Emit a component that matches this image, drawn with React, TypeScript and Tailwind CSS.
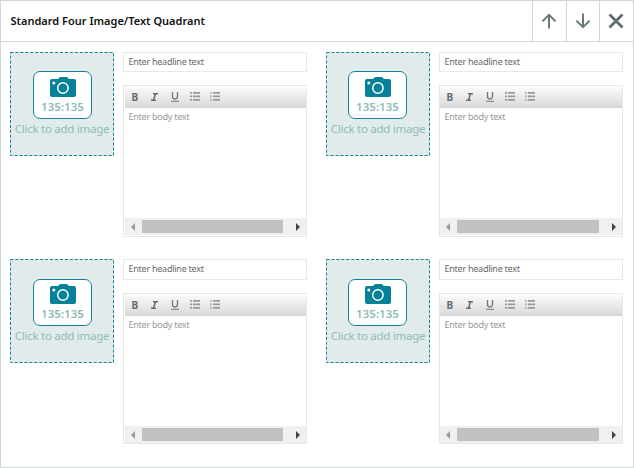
import React from "react";

function Arrow({ down = false }: { down?: boolean }) {
  return (
    <svg width="16" height="16" viewBox="0 0 16 16" fill="none" stroke="#68797a" strokeWidth="2" className={down ? "rotate-180" : ""}>
      <path d="M8 15.5V2M1.4 8.4L8 1.8L14.6 8.4" />
    </svg>
  );
}

function Camera() {
  return (
    <svg width="26" height="20" viewBox="0 0 26 20" className="block">
      <path d="M1.8 2H8l1.5-1.6Q10 0 10.8 0h5.4q.8 0 1.3.4L19 2h5q2 0 2 2v14q0 2-2 2H2q-2 0-2-2V4q0-2 1.8-2z" fill="#068298" />
      <circle cx="12.9" cy="11" r="5.2" fill="none" stroke="#fff" strokeWidth="1.5" />
      <circle cx="3.8" cy="6" r="1.5" fill="#fff" />
    </svg>
  );
}

function ImageSlot({ shift, lower }: { shift: boolean; lower: boolean }) {
  return (
    <div className="relative h-[104px] w-[104px] shrink-0 bg-[#e1ebec]">
      <svg width="104" height="104" className="absolute inset-0">
        <rect x="0.5" y="0.5" width="103" height="103" fill="none" stroke="#158294" strokeDasharray="3 1.95" />
      </svg>
      <div className={`flex flex-col items-center ${lower ? "pt-5" : "pt-[19px]"}`}>
        <div className={`flex w-[59px] flex-col items-center rounded-[7px] border border-[#158294] bg-white ${lower ? "h-[47px] pt-1" : "h-12 pt-[5px]"} ${shift ? "-ml-px" : "ml-px"}`}>
          <Camera />
          <span className="mt-[3px] font-['Noto_Sans',sans-serif] text-[11.5px] leading-[14px] font-semibold tracking-[0.05px] whitespace-nowrap text-[#8dbcb6]">135:135</span>
        </div>
        <span className="mt-[2px] font-['Noto_Sans',sans-serif] text-[11.5px] leading-4 tracking-[-0.26px] whitespace-nowrap text-[#8dbcb6]">Click to add image</span>
      </div>
    </div>
  );
}

function ListIcon({ numbered = false }: { numbered?: boolean }) {
  return (
    <svg width="11" height="9" viewBox="0 0 11 9" fill="#929a99">
      {[0, 3.5, 7].map((y) => (
        <g key={y}>
          <rect x={numbered ? 0.3 : 0} y={y} width={numbered ? 1.3 : 2} height="1.7" />
          <rect x="3" y={y} width="7" height="1.7" />
        </g>
      ))}
    </svg>
  );
}

function Toolbar() {
  return (
    <div className="flex h-[22px] items-center border-b border-[#d4d4d4] bg-linear-to-b from-[#fcfcfc] to-[#dadada] pl-[5px] font-['Noto_Sans',sans-serif] text-[10px] leading-none text-[#626c6b]">
      <span className="flex w-5 pl-[1.5px] font-bold">B</span>
      <span className="flex w-5 pl-px">
        <svg width="7" height="8" viewBox="0 0 7 8" fill="none" stroke="#626c6b" strokeWidth="1.5">
          <path d="M2 .75h5M0 7.25h5M4.5 .8L2.5 7.2" />
        </svg>
      </span>
      <span className="flex w-5 pl-px">
        <svg width="8" height="10" viewBox="0 0 8 10" fill="none" stroke="#707978">
          <path d="M1.5 0v4.5a2.5 2.5 0 0 0 5 0V0" strokeWidth="1.3" />
          <path d="M0 9.3h8" />
        </svg>
      </span>
      <span className="flex w-5"><ListIcon /></span>
      <span className="flex w-5"><ListIcon numbered /></span>
    </div>
  );
}

function Scrollbar({ right }: { right: boolean }) {
  return (
    <div className="flex h-[17px] items-center bg-[#f0f0f0] px-1.5">
      <svg width="4" height="8" viewBox="0 0 4 8"><path d="M4 0v8L0 4z" fill="#999" /></svg>
      <div className={`ml-[7px] h-[13px] bg-[#c1c1c1] ${right ? "w-[142px]" : "w-[141px]"}`} />
      <svg width="4" height="8" viewBox="0 0 4 8" className="ml-auto"><path d="M0 0v8l4-4z" fill="#444" /></svg>
    </div>
  );
}

function Quadrant({ right = false, lower = false }: { right?: boolean; lower?: boolean }) {
  return (
    <section className="flex w-[297px] gap-[9px]">
      <ImageSlot shift={right} lower={lower} />
      <div className="flex w-[184px] flex-col font-['Noto_Sans',sans-serif] text-[9px]">
        <div className={`border border-[#e5e9e9] pl-[4.5px] leading-[17px] tracking-[-0.25px] text-[#66696c] ${lower ? "h-[21px]" : "h-5"}`}>
          <span className="whitespace-nowrap">Enter headline text</span>
        </div>
        <div className={`mt-[13px] flex flex-col border border-[#e5e9e9] ${right ? "" : "pl-px"} ${lower ? "h-[151px]" : "h-[152px]"}`}>
          <Toolbar />
          <div className={`flex-1 leading-[18px] tracking-[-0.25px] text-[#959a9b] ${right ? "pl-[4.5px]" : "pl-[3.5px]"}`}>
            <span className="whitespace-nowrap">Enter body text</span>
          </div>
          <Scrollbar right={right} />
          {!lower && <div className="h-px" />}
        </div>
      </div>
    </section>
  );
}

export default function App() {
  return (
    <main className="h-[468px] w-[634px] border border-[#d3d7d7] bg-white">
      <header className="flex h-[41px] items-stretch border-b border-[#d3d7d7]">
        <h1 className="flex flex-1 items-center pl-[9.5px] font-['Noto_Sans',sans-serif] text-[11px] font-semibold whitespace-nowrap text-[#111]">
          <span>Standard Four Image/Text Quadrant</span>
        </h1>
        <button className="flex w-[34px] items-center justify-center border-l border-[#d3d7d7] pr-px"><Arrow /></button>
        <button className="flex w-[33px] items-center justify-center border-l border-[#d3d7d7]"><Arrow down /></button>
        <button className="flex w-[34px] items-center justify-center border-l border-[#d3d7d7] pr-[2px]">
          <svg width="16" height="16" viewBox="0 0 16 16" stroke="#5d6d6e" strokeWidth="2.8"><path d="M1.5 1.5l13 13M14.5 1.5l-13 13" /></svg>
        </button>
      </header>
      <div className="grid grid-cols-[297px_297px] gap-x-[19px] px-[9px] pt-[10px]">
        <div className="h-[207px]"><Quadrant /></div>
        <div className="h-[207px]"><Quadrant right /></div>
        <Quadrant lower />
        <Quadrant right lower />
      </div>
    </main>
  );
}
